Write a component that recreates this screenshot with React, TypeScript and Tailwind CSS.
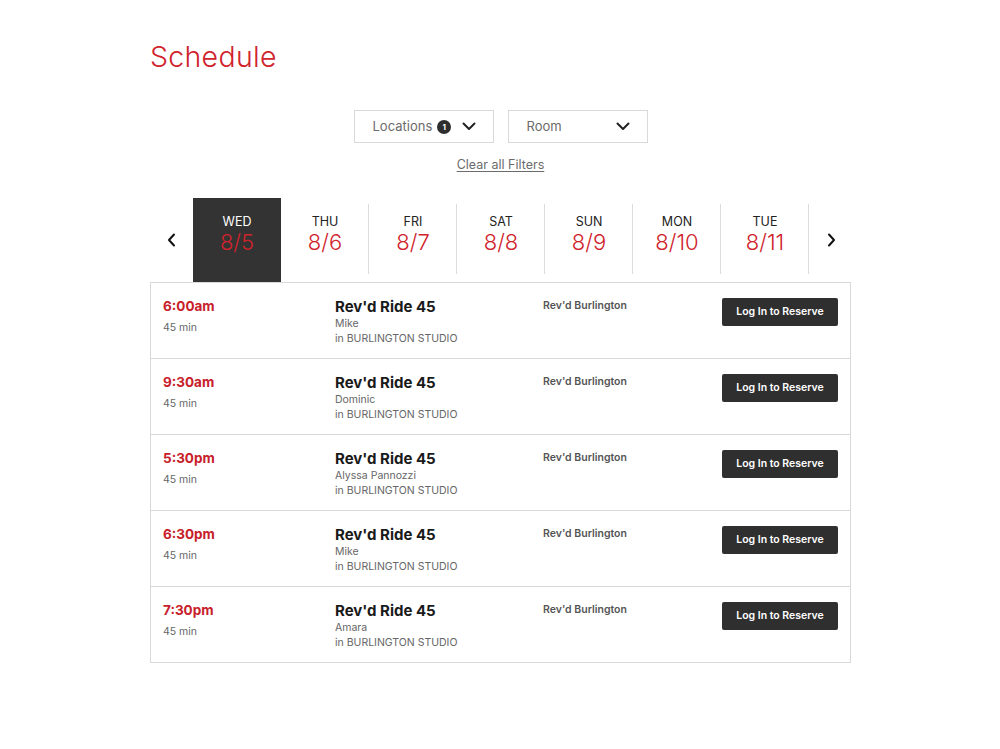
import React from "react";

const days = [
  { d: "WED", n: "8/5" },
  { d: "THU", n: "8/6" },
  { d: "FRI", n: "8/7" },
  { d: "SAT", n: "8/8" },
  { d: "SUN", n: "8/9" },
  { d: "MON", n: "8/10" },
  { d: "TUE", n: "8/11" },
];

const rows = [
  { t: "6:00am", i: "Mike" },
  { t: "9:30am", i: "Dominic" },
  { t: "5:30pm", i: "Alyssa Pannozzi" },
  { t: "6:30pm", i: "Mike" },
  { t: "7:30pm", i: "Amara" },
];

const Chevron = ({ className = "" }: { className?: string }) => (
  <svg width="14" height="9" viewBox="0 0 14 9" className={className}>
    <path d="M1.5 1.5 L7 7 L12.5 1.5" fill="none" stroke="#222" strokeWidth="2" strokeLinecap="round" strokeLinejoin="round" />
  </svg>
);

export default function App() {
  return (
    <div className="min-h-[749px] bg-white" style={{ fontFamily: "Inter, 'Noto Sans', sans-serif" }}>
      <div className="ml-[150px] w-[701px] pt-[37px]">
        <h1 className="text-[28.5px] leading-[40px] font-light text-[#d0232c] tracking-[0.3px]">Schedule</h1>

        <div className="mt-[33px] flex justify-center gap-[14px]">
          <button className="flex h-[33px] w-[140px] items-center border border-[#d9d9d9] bg-white pl-[18px] pr-[17px] text-[13px] text-[#6b6b6b]">
            <span>Locations</span>
            <span className="ml-[5px] flex h-[14px] w-[14px] items-center justify-center rounded-full bg-[#2e2e2e] text-[8px] font-bold text-white">1</span>
            <Chevron className="ml-auto" />
          </button>
          <button className="flex h-[33px] w-[140px] items-center border border-[#d9d9d9] bg-white pl-[18px] pr-[17px] text-[13px] text-[#6b6b6b]">
            <span>Room</span>
            <Chevron className="ml-auto" />
          </button>
        </div>

        <div className="mt-[10px] text-center leading-[20px]">
          <span className="text-[12.5px] text-[#6b6b6b] underline underline-offset-2">Clear all Filters</span>
        </div>

        <div className="mt-[23px] flex h-[84px] items-stretch">
          <div className="flex w-[43px] items-center justify-center">
            <svg width="9" height="14" viewBox="0 0 9 14">
              <path d="M7 1.5 L2 7 L7 12.5" fill="none" stroke="#111" strokeWidth="2" strokeLinecap="round" strokeLinejoin="round" />
            </svg>
          </div>
          {days.map((day, idx) => (
            <div
              key={day.d}
              className={
                idx === 0
                  ? "flex w-[88px] flex-col items-center bg-[#333333] pt-[17px]"
                  : "relative flex w-[88px] flex-col items-center pt-[17px]"
              }
            >
              {idx > 0 && (
                <div className="absolute right-0 top-[6px] h-[70px] w-px bg-[#dcdcdc]" />
              )}
              <div className={idx === 0 ? "text-[12.5px] leading-[14px] text-white" : "text-[12.5px] leading-[14px] text-[#222]"}>{day.d}</div>
              <div className="text-[22px] leading-[26px] font-light text-[#d0232c]">{day.n}</div>
            </div>
          ))}
          <div className="flex flex-1 items-center justify-center pl-[2px]">
            <svg width="9" height="14" viewBox="0 0 9 14">
              <path d="M2 1.5 L7 7 L2 12.5" fill="none" stroke="#111" strokeWidth="2" strokeLinecap="round" strokeLinejoin="round" />
            </svg>
          </div>
        </div>

        <div className="border border-[#d9d9d9]">
          {rows.map((r, idx) => (
            <div key={idx} className={idx === 0 ? "flex h-[75px] pt-[14px]" : "flex h-[76px] border-t border-[#d9d9d9] pt-[14px]"}>
              <div className="w-[184px] pl-[12px]">
                <div className="text-[13.5px] leading-[18px] font-bold text-[#c8202a]">{r.t}</div>
                <div className="mt-[6px] text-[10.5px] leading-[14px] text-[#666]">45 min</div>
              </div>
              <div className="w-[208px]">
                <div className="text-[15px] leading-[20px] font-bold text-[#1a1a1a]">Rev'd Ride 45</div>
                <div className="text-[10.5px] leading-[14px] text-[#666]">{r.i}</div>
                <div className="mt-[1px] text-[10.5px] leading-[14px] text-[#666]">in BURLINGTON STUDIO</div>
              </div>
              <div className="w-[179px] pt-[2px]">
                <div className="text-[10.5px] leading-[14px] font-semibold text-[#555]">Rev'd Burlington</div>
              </div>
              <div>
                <button className="h-[28px] w-[116px] rounded-[2px] bg-[#2f2f2f] text-[10.5px] font-semibold text-white">Log In to Reserve</button>
              </div>
            </div>
          ))}
        </div>
      </div>
    </div>
  );
}
